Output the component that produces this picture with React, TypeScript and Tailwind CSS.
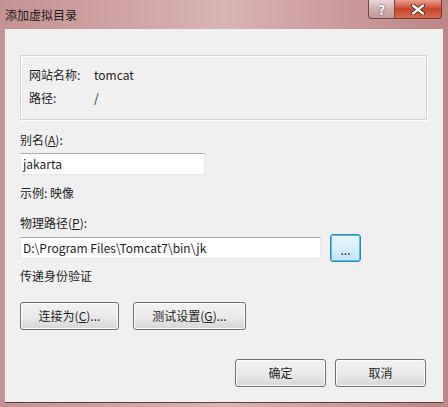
import React from 'react';

const font = { fontFamily: '"Noto Sans CJK SC", "Liberation Sans", sans-serif' };

const Btn: React.FC<{ w: string; children: React.ReactNode }> = ({ w, children }) => (
  <button
    className={`${w} h-[28px] rounded-[3px] border border-[#707070] bg-gradient-to-b from-[#f2f2f2] via-[#ebebeb] to-[#d6d6d6] text-[12px] leading-[16px] text-[#1e1e1e] shadow-[inset_0_0_0_1px_#fcfcfc]`}
  >
    {children}
  </button>
);

const App: React.FC = () => {
  return (
    <div
      style={font}
      className="w-[448px] h-[407px] flex flex-col bg-gradient-to-r from-[#c49292] via-[#d8b4b2] to-[#bd8585] overflow-hidden"
    >
      {/* title bar */}
      <div className="h-[29px] flex items-start shrink-0">
        <div className="pl-[5px] pt-[7px] text-[12px] leading-[16px] text-[#1a1a1a]">添加虚拟目录</div>
        <div className="ml-auto mr-[6px] flex">
          <div className="w-[27px] h-[19px] rounded-bl-[4px] border border-t-0 border-[#6d4a4a] bg-gradient-to-b from-[#ead6d6] via-[#d2b0b0] to-[#c49898] flex items-center justify-center text-white text-[13px] font-bold leading-none [text-shadow:0_0_2px_#333]">
            ?
          </div>
          <div className="w-[47px] h-[19px] rounded-br-[4px] border border-l-0 border-t-0 border-[#6d3a34] bg-gradient-to-b from-[#e9a08e] via-[#c9442d] to-[#d96a4f] flex items-center justify-center">
            <svg width="14" height="11" viewBox="0 0 14 11">
              <path d="M2 1.5 L12 9.5 M12 1.5 L2 9.5" stroke="#3a1a1a" strokeWidth="4" strokeLinecap="round" />
              <path d="M2 1.5 L12 9.5 M12 1.5 L2 9.5" stroke="#ffffff" strokeWidth="2.4" strokeLinecap="round" />
            </svg>
          </div>
        </div>
      </div>

      {/* client area */}
      <div className="mx-[5px] w-[438px] h-[374px] bg-[#f0f0f0] border-b border-[#5e3d3d] pl-[15px] pr-[16px] pt-[26px] flex flex-col text-[12px] leading-[16px] text-[#1e1e1e]">
        <div className="w-[407px] h-[65px] border border-[#d5d5d5] shadow-[inset_1px_1px_0_#ffffff,1px_1px_0_#ffffff] pt-[11px] pl-[8px] flex flex-col gap-[7px]">
          <div className="flex">
            <span className="w-[65px]">网站名称:</span>
            <span>tomcat</span>
          </div>
          <div className="flex">
            <span className="w-[65px]">路径:</span>
            <span>/</span>
          </div>
        </div>

        <div className="mt-[12px]">
          别名(<span className="underline">A</span>):
        </div>
        <div className="mt-[5px] w-[185px] h-[22px] bg-white border border-[#e3e9ef] border-t-[#abadb3] px-[2px] flex items-center">
          jakarta
        </div>

        <div className="mt-[10px]">示例: 映像</div>

        <div className="mt-[14px]">
          物理路径(<span className="underline">P</span>):
        </div>
        <div className="mt-[3px] h-[28px] flex items-center">
          <div className="w-[301px] h-[22px] bg-white border border-[#e3e9ef] border-t-[#abadb3] px-[2px] flex items-center">
            D:\Program Files\Tomcat7\bin\jk
          </div>
          <button className="ml-[9px] w-[31px] h-[28px] rounded-[3px] border border-[#3c7fb1] bg-gradient-to-b from-[#eaf6fd] via-[#d9f0fc] to-[#bee6fd] shadow-[inset_0_0_0_1px_#48c4f0] text-[12px] leading-none pt-[4px]">
            ...
          </button>
        </div>

        <div className="mt-[6px]">传递身份验证</div>

        <div className="mt-[18px] flex gap-[14px]">
          <Btn w="w-[99px]">
            连接为(<span className="underline">C</span>)...
          </Btn>
          <Btn w="w-[113px]">
            测试设置(<span className="underline">G</span>)...
          </Btn>
        </div>

        <div className="mt-[29px] flex justify-end gap-[9px] pr-[1px]">
          <Btn w="w-[91px]">确定</Btn>
          <Btn w="w-[91px]">取消</Btn>
        </div>
      </div>
    </div>
  );
};

export default App;
